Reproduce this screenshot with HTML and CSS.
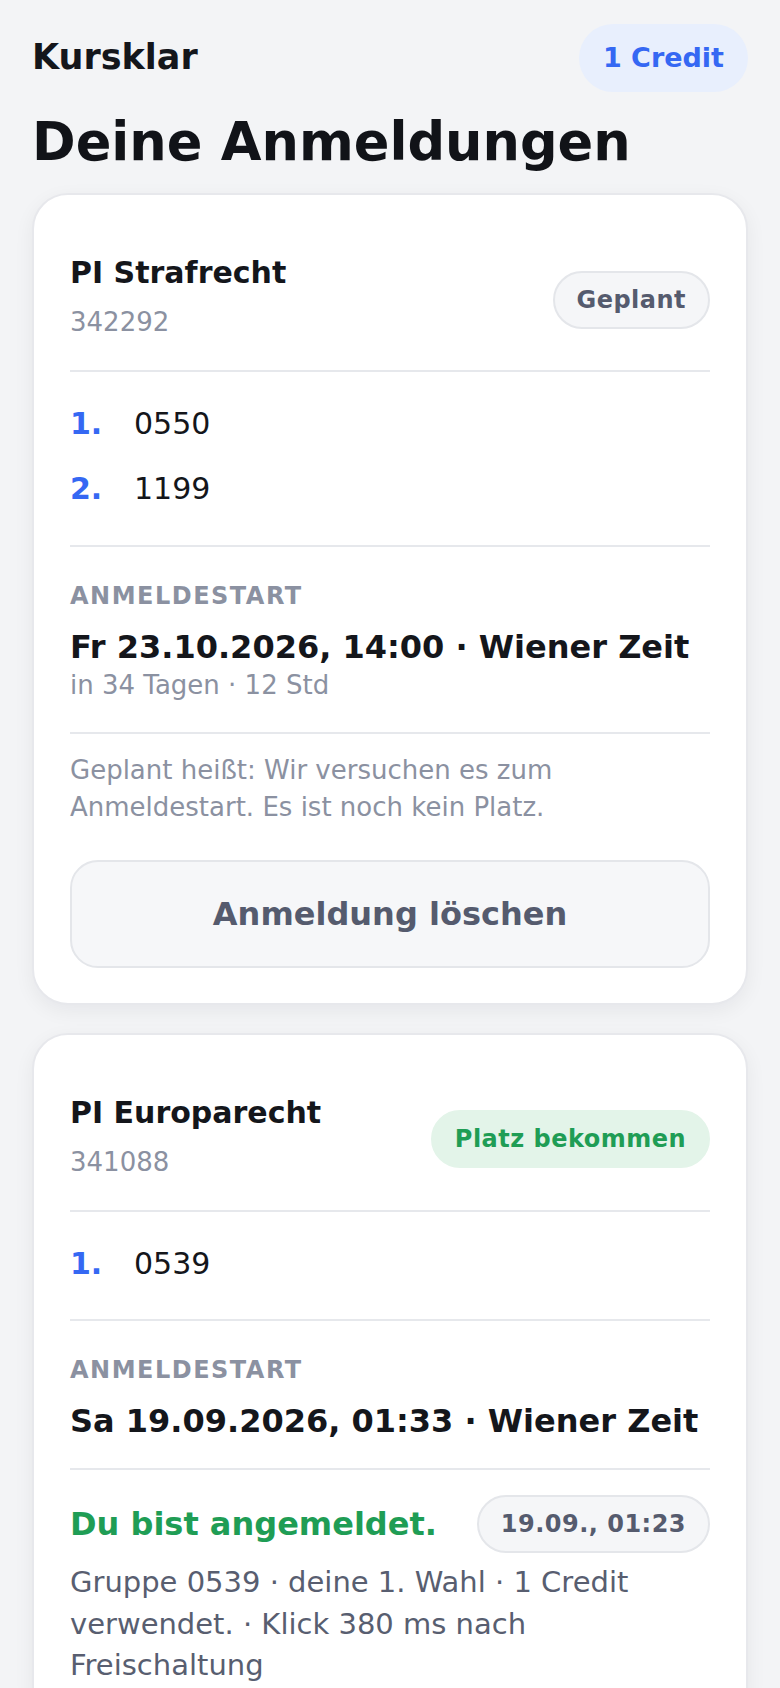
FILE: index.html
```html
<!DOCTYPE html>
<html lang="de">
<head>
    <meta charset="UTF-8">
    <title>Deine Anmeldungen | Kursklar</title>
    <meta name="viewport" content="width=device-width, initial-scale=1.0" />
    <link rel="stylesheet" href="styles.css">
</head>
<body>
    <div class="page">
        <header class="topbar">
            <div class="brand">Kursklar</div>
            <div class="credits">1 Credit</div>
        </header>

        <h1 class="page-title">Deine Anmeldungen</h1>

        <div class="card">
            <div class="card-head">
                <div>
                    <h2 class="course-name">PI Strafrecht</h2>
                    <div class="course-id">342292</div>
                </div>
                <span class="pill pill-gray">Geplant</span>
            </div>
            <ol class="choices">
                <li><span class="choice-num">1.</span>0550</li>
                <li><span class="choice-num">2.</span>1199</li>
            </ol>
            <div class="start">
                <div class="label">Anmeldestart</div>
                <div class="start-date">Fr 23.10.2026, 14:00 · Wiener Zeit</div>
                <div class="start-in">in 34 Tagen · 12 Std</div>
            </div>
            <p class="note">Geplant heißt: Wir versuchen es zum Anmeldestart. Es ist noch kein Platz.</p>
            <button class="btn-delete">Anmeldung löschen</button>
        </div>

        <div class="card">
            <div class="card-head">
                <div>
                    <h2 class="course-name">PI Europarecht</h2>
                    <div class="course-id">341088</div>
                </div>
                <span class="pill pill-green">Platz bekommen</span>
            </div>
            <ol class="choices">
                <li><span class="choice-num">1.</span>0539</li>
            </ol>
            <div class="start">
                <div class="label">Anmeldestart</div>
                <div class="start-date">Sa 19.09.2026, 01:33 · Wiener Zeit</div>
            </div>
            <div class="status">
                <div class="status-row">
                    <div class="status-title">Du bist angemeldet.</div>
                    <span class="pill pill-gray">19.09., 01:23</span>
                </div>
                <p class="status-text">Gruppe 0539 · deine 1. Wahl · 1 Credit verwendet. · Klick 380 ms nach Freischaltung</p>
            </div>
        </div>
    </div>
</body>
</html>
```

FILE: styles.css
```css
body {
    margin: 0;
    background: #f3f4f6;
    font-family: "DejaVu Sans", sans-serif;
    color: #14161b;
}

.page {
    padding: 24px 32px 40px;
}

.topbar {
    display: flex;
    justify-content: space-between;
    align-items: center;
}

.brand {
    font-size: 35px;
    font-weight: 700;
    margin-top: -3px;
}

.credits {
    height: 68px;
    line-height: 68px;
    padding: 0 24px;
    border-radius: 34px;
    background: #e8effd;
    color: #3568f3;
    font-size: 27px;
    font-weight: 700;
}

.page-title {
    margin: 18px 0 20px;
    font-size: 52.6px;
    line-height: 63px;
    font-weight: 700;
    color: #111318;
}

.card {
    background: #fff;
    border: 2px solid #e7e8ec;
    border-radius: 36px;
    padding: 58px 36px 35px;
    box-shadow: 0 6px 20px rgba(20, 24, 40, 0.06);
}

.card + .card {
    margin-top: 28px;
}

.card-head {
    display: flex;
    justify-content: space-between;
    align-items: center;
    padding-bottom: 24px;
    border-bottom: 2px solid #e6e8ec;
}

.course-name {
    margin: 0;
    font-size: 30px;
    line-height: 40px;
    font-weight: 700;
}

.course-id {
    margin: 10px 0 5px;
    font-size: 26px;
    line-height: 38px;
    color: #8b91a1;
}

.pill {
    box-sizing: border-box;
    height: 58px;
    line-height: 54px;
    padding: 0 22px;
    border: 2px solid transparent;
    border-radius: 29px;
    font-size: 24px;
    font-weight: 700;
    letter-spacing: 0.48px;
    white-space: nowrap;
}

.pill-gray {
    background: #f5f6f8;
    border-color: #e4e6ea;
    color: #555b6e;
}

.pill-green {
    background: #e3f4e9;
    border-color: #e3f4e9;
    color: #1f9d55;
}

.choices {
    list-style: none;
    margin: 0;
    padding: 30px 0 34px;
    border-bottom: 2px solid #e6e8ec;
    font-size: 30px;
    line-height: 43.5px;
}

.choices li + li {
    margin-top: 21.5px;
}

.choice-num {
    display: inline-block;
    width: 64px;
    color: #3568f3;
    font-weight: 700;
}

.start {
    padding: 32px 0 28px;
    border-bottom: 2px solid #e6e8ec;
}

.label {
    font-size: 24px;
    line-height: 35px;
    font-weight: 700;
    letter-spacing: 1.5px;
    text-transform: uppercase;
    color: #8b91a1;
}

.start-date {
    margin-top: 14px;
    font-size: 32px;
    line-height: 38px;
    font-weight: 700;
}

.start-in {
    font-size: 26px;
    line-height: 38px;
    color: #8b91a1;
}

.note {
    margin: 0;
    padding-top: 18px;
    font-size: 26px;
    line-height: 37.7px;
    color: #8b91a1;
}

.btn-delete {
    display: block;
    width: 100%;
    height: 108px;
    margin-top: 33px;
    border: 2px solid #e4e6ea;
    border-radius: 28px;
    background: #f6f7f9;
    font-family: inherit;
    font-size: 32px;
    font-weight: 700;
    color: #555b6e;
    cursor: pointer;
}

.status {
    padding-top: 25px;
}

.status-row {
    display: flex;
    justify-content: space-between;
    align-items: center;
}

.status-title {
    font-size: 32px;
    line-height: 42px;
    font-weight: 700;
    color: #1f9d55;
}

.status-text {
    margin: 9px 0 0;
    font-size: 29px;
    line-height: 41.5px;
    color: #585e70;
}
```
